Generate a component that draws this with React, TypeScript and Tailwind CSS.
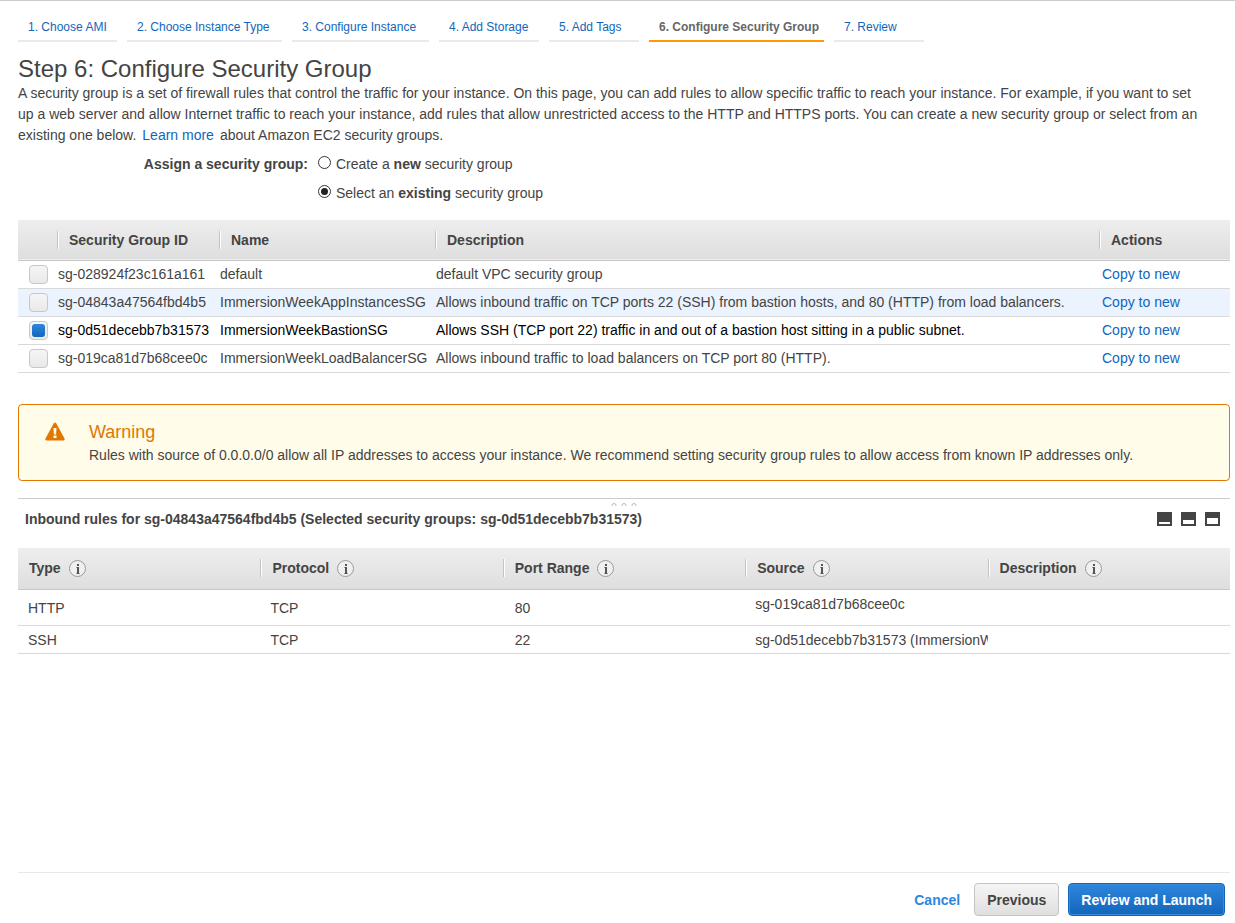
import { useState, type ReactNode } from "react";

const steps = [
  { label: "1. Choose AMI", width: "w-[99px]" },
  { label: "2. Choose Instance Type", width: "w-[155px]" },
  { label: "3. Configure Instance", width: "w-[137px]" },
  { label: "4. Add Storage", width: "w-[100px]" },
  { label: "5. Add Tags", width: "w-[90px]" },
  { label: "6. Configure Security Group", width: "w-[175px]" },
  { label: "7. Review", width: "w-[90px]" },
];
const currentStep = 5;

const groups = [
  { id: "sg-028924f23c161a161", name: "default", description: "default VPC security group" },
  {
    id: "sg-04843a47564fbd4b5",
    name: "ImmersionWeekAppInstancesSG",
    description: "Allows inbound traffic on TCP ports 22 (SSH) from bastion hosts, and 80 (HTTP) from load balancers.",
  },
  {
    id: "sg-0d51decebb7b31573",
    name: "ImmersionWeekBastionSG",
    description: "Allows SSH (TCP port 22) traffic in and out of a bastion host sitting in a public subnet.",
  },
  {
    id: "sg-019ca81d7b68cee0c",
    name: "ImmersionWeekLoadBalancerSG",
    description: "Allows inbound traffic to load balancers on TCP port 80 (HTTP).",
  },
];
const focusedGroup = "sg-04843a47564fbd4b5";

const rules = [
  { type: "HTTP", protocol: "TCP", port: "80", source: "sg-019ca81d7b68cee0c", tall: true },
  { type: "SSH", protocol: "TCP", port: "22", source: "sg-0d51decebb7b31573 (ImmersionWeekBastionSG)", tall: false },
];

export default function App() {
  const [mode, setMode] = useState("existing");
  const [selected, setSelected] = useState(["sg-0d51decebb7b31573"]);

  const toggle = (id: string) =>
    setSelected((s) => (s.includes(id) ? s.filter((x) => x !== id) : [...s, id]));

  return (
    <div className="flex min-h-screen flex-col border-t border-[#ccc] bg-white pl-[18px] pr-[5px] font-['Liberation_Sans',Arial,sans-serif] text-sm text-[#444]">
      <WizardSteps />

      <main className="grow">
        <h1 className="mt-[13px] text-2xl leading-7">Step 6: Configure Security Group</h1>
        <p className="pr-7 leading-[21px]">
          A security group is a set of firewall rules that control the traffic for your instance. On this page, you can
          add rules to allow specific traffic to reach your instance. For example, if you want to set up a web server
          and allow Internet traffic to reach your instance, add rules that allow unrestricted access to the HTTP and
          HTTPS ports. You can create a new security group or select from an existing one below.
          <a href="#learn" className="mx-1.5 text-[#1166bb]">Learn more</a>
          about Amazon EC2 security groups.
        </p>

        <div role="radiogroup" aria-labelledby="assign" className="mt-2 flex leading-[21px]">
          <div id="assign" className="w-[290px] text-right font-bold">Assign a security group:</div>
          <div className="flex flex-col gap-2 pl-2.5">
            <Radio value="new" mode={mode} onChange={setMode}>
              Create a <b>new</b> security group
            </Radio>
            <Radio value="existing" mode={mode} onChange={setMode}>
              Select an <b>existing</b> security group
            </Radio>
          </div>
        </div>

        <table className="mt-4 w-full table-fixed border-collapse text-left">
          <colgroup>
            <col className="w-[39px]" />
            <col className="w-[162px]" />
            <col className="w-[216px]" />
            <col />
            <col className="w-[131px]" />
          </colgroup>
          <thead>
            <tr className="h-10 border-b border-[#c8c8c8] bg-linear-to-b from-[#eee] to-[#dedede]">
              <td />
              <Th>Security Group ID</Th>
              <Th>Name</Th>
              <Th>Description</Th>
              <Th>Actions</Th>
            </tr>
          </thead>
          <tbody>
            {groups.map((g) => {
              const checked = selected.includes(g.id);
              return (
                <tr
                  key={g.id}
                  className={`h-7 whitespace-nowrap border-b border-[#d9d9d9] ${g.id === focusedGroup ? "bg-[#eaf3fe]" : ""} ${checked ? "text-black" : ""}`}
                >
                  <td className="p-0">
                    <input
                      type="checkbox"
                      aria-label={`Select ${g.id}`}
                      checked={checked}
                      onChange={() => toggle(g.id)}
                      className="ml-[11px] grid size-[19px] appearance-none place-items-center rounded border border-[#c8c8c8] bg-linear-to-b from-[#f5f5f5] to-[#e9e9e9] before:size-[13px] before:rounded-[3px] checked:before:bg-linear-to-b checked:before:from-[#2e86de] checked:before:to-[#1166bb]"
                    />
                  </td>
                  <td className="p-0 pl-px">{g.id}</td>
                  <td className="p-0 pl-px">{g.name}</td>
                  <td className="p-0 pl-px">{g.description}</td>
                  <td className="p-0 pl-[3px]">
                    <a href="#copy" className="text-[#1166bb]">Copy to new</a>
                  </td>
                </tr>
              );
            })}
          </tbody>
        </table>

        <section role="alert" className="mt-[31px] flex min-h-[77px] rounded border border-[#e07700] bg-[#fffcea] pl-[26px] pt-4">
          <WarningIcon />
          <div className="ml-6">
            <h2 className="text-lg leading-[22px] text-[#e07700]">Warning</h2>
            <p className="leading-6">
              Rules with source of 0.0.0.0/0 allow all IP addresses to access your instance. We recommend setting
              security group rules to allow access from known IP addresses only.
            </p>
          </div>
        </section>

        <section className="mt-[17px] border-t border-[#ccc]">
          <div className="flex h-2 items-end justify-center">
            <Grip />
          </div>
          <div className="flex h-[41px] items-start justify-between pl-[7px] pr-2.5">
            <h2 className="pt-0.5 font-bold leading-5">
              Inbound rules for sg-04843a47564fbd4b5 (Selected security groups: sg-0d51decebb7b31573)
            </h2>
            <div className="flex gap-[9px] pt-[5px]">
              <PanelButton label="Minimize panel" y={10} h={2} />
              <PanelButton label="Split panel" y={8} h={4} />
              <PanelButton label="Maximize panel" y={6} h={6} />
            </div>
          </div>

          <table className="w-full table-fixed border-collapse text-left">
            <thead>
              <tr className="h-[42px] border-b border-[#c8c8c8] bg-linear-to-b from-[#eee] to-[#dedede]">
                <Th first info>Type</Th>
                <Th info>Protocol</Th>
                <Th info>Port Range</Th>
                <Th info>Source</Th>
                <Th info>Description</Th>
              </tr>
            </thead>
            <tbody>
              {rules.map((r) => (
                <tr key={r.type} className={`border-b border-[#d9d9d9] ${r.tall ? "h-9" : "h-7"}`}>
                  <td className="p-0 pl-2.5">{r.type}</td>
                  <td className="p-0 pl-2.5">{r.protocol}</td>
                  <td className="p-0 pl-3">{r.port}</td>
                  <td className="overflow-hidden whitespace-nowrap p-0 pl-2.5 pt-1 align-top">{r.source}</td>
                  <td />
                </tr>
              ))}
            </tbody>
          </table>
        </section>
      </main>

      <footer className="flex items-center justify-end border-t border-[#e8e8e8] pb-[7px] pr-[5px] pt-2.5 font-bold">
        <button type="button" className="mr-3.5 text-[#2e86de]">Cancel</button>
        <button
          type="button"
          className="mr-[9px] h-[33px] rounded border border-[#c4c4c4] bg-linear-to-b from-[#f5f5f5] to-[#dfdfdf] px-3"
        >
          Previous
        </button>
        <button
          type="button"
          className="h-[33px] rounded border border-[#1166bb] bg-linear-to-b from-[#2e86de] to-[#1166bb] px-3 text-white inset-shadow-[0_0_0_1px_#3a8ad8]"
        >
          Review and Launch
        </button>
      </footer>
    </div>
  );
}

function WizardSteps() {
  return (
    <nav className="flex gap-2.5 pt-3.5 text-xs">
      {steps.map(({ label, width }, i) => (
        <a
          key={label}
          href={`#step-${i + 1}`}
          aria-current={i === currentStep ? "step" : undefined}
          className={`h-[27px] whitespace-nowrap border-b-2 pl-2.5 leading-6 ${width} ${
            i === currentStep ? "border-[#f90] font-bold text-[#666]" : "border-[#eaeaea] text-[#1166bb]"
          }`}
        >
          {label}
        </a>
      ))}
    </nav>
  );
}

function Radio({ value, mode, onChange, children }: { value: string; mode: string; onChange: (v: string) => void; children: ReactNode }) {
  return (
    <label className="flex">
      <input
        type="radio"
        name="assign"
        value={value}
        checked={mode === value}
        onChange={() => onChange(value)}
        className="mr-[5px] mt-0.5 grid size-[13px] appearance-none place-items-center rounded-full border border-[#333] before:size-[7px] before:rounded-full checked:before:bg-[#222]"
      />
      <span>{children}</span>
    </label>
  );
}

function Th({ first, info, children }: { first?: boolean; info?: boolean; children: ReactNode }) {
  return (
    <th className="p-0">
      <div className={`flex h-[18px] items-center ${first ? "pl-[11px]" : "border-l border-[#c4c4c4]"}`}>
        {!first && <span className="mr-2.5 h-full w-px bg-white" />}
        {children}
        {info && <InfoIcon />}
      </div>
    </th>
  );
}

function PanelButton({ label, y, h }: { label: string; y: number; h: number }) {
  return (
    <button type="button" aria-label={label}>
      <svg width="15" height="14" viewBox="0 0 15 14" shapeRendering="crispEdges">
        <path d="M0 0h15v14H0z" fill="#444" />
        <rect x="2" y={y} width="11" height={h} fill="#fff" />
      </svg>
    </button>
  );
}

const InfoIcon = () => (
  <svg className="ml-2 shrink-0" width="17" height="17" viewBox="0 0 17 17">
    <circle cx="8.5" cy="8.5" r="8" fill="#f0f0f0" stroke="#999" />
    <path d="M8 4h2v2H8zM8 7h2v7H8z" fill="#555" />
    <path d="M7 7h1v1H7zM7 13h1v1H7zM10 13h1v1h-1z" fill="#999" />
  </svg>
);

const WarningIcon = () => (
  <svg className="mt-px shrink-0" width="20" height="19" viewBox="0 0 20 19">
    <path d="M10 .5c.5 0 .9.3 1.200.8l8.300 15.200c.5 1-.1 2-1.100 2H1.600c-1 0-1.600-1-1.100-2L8.800 1.300c.3-.5.7-.8 1.200-.8Z" fill="#e07700" />
    <path d="M8.500 6h3l-.4 6.500H8.900zM8.500 13.500h3V16h-3z" fill="#fffcea" />
  </svg>
);

const Grip = () => (
  <svg width="26" height="5" viewBox="0 0 26 5" fill="none" stroke="#bbb">
    <path d="M1 4V2.500Q3 .3 5 2.500V4M11 4V2.500Q13 .3 15 2.500V4M21 4V2.500Q23 .3 25 2.500V4" />
  </svg>
);
